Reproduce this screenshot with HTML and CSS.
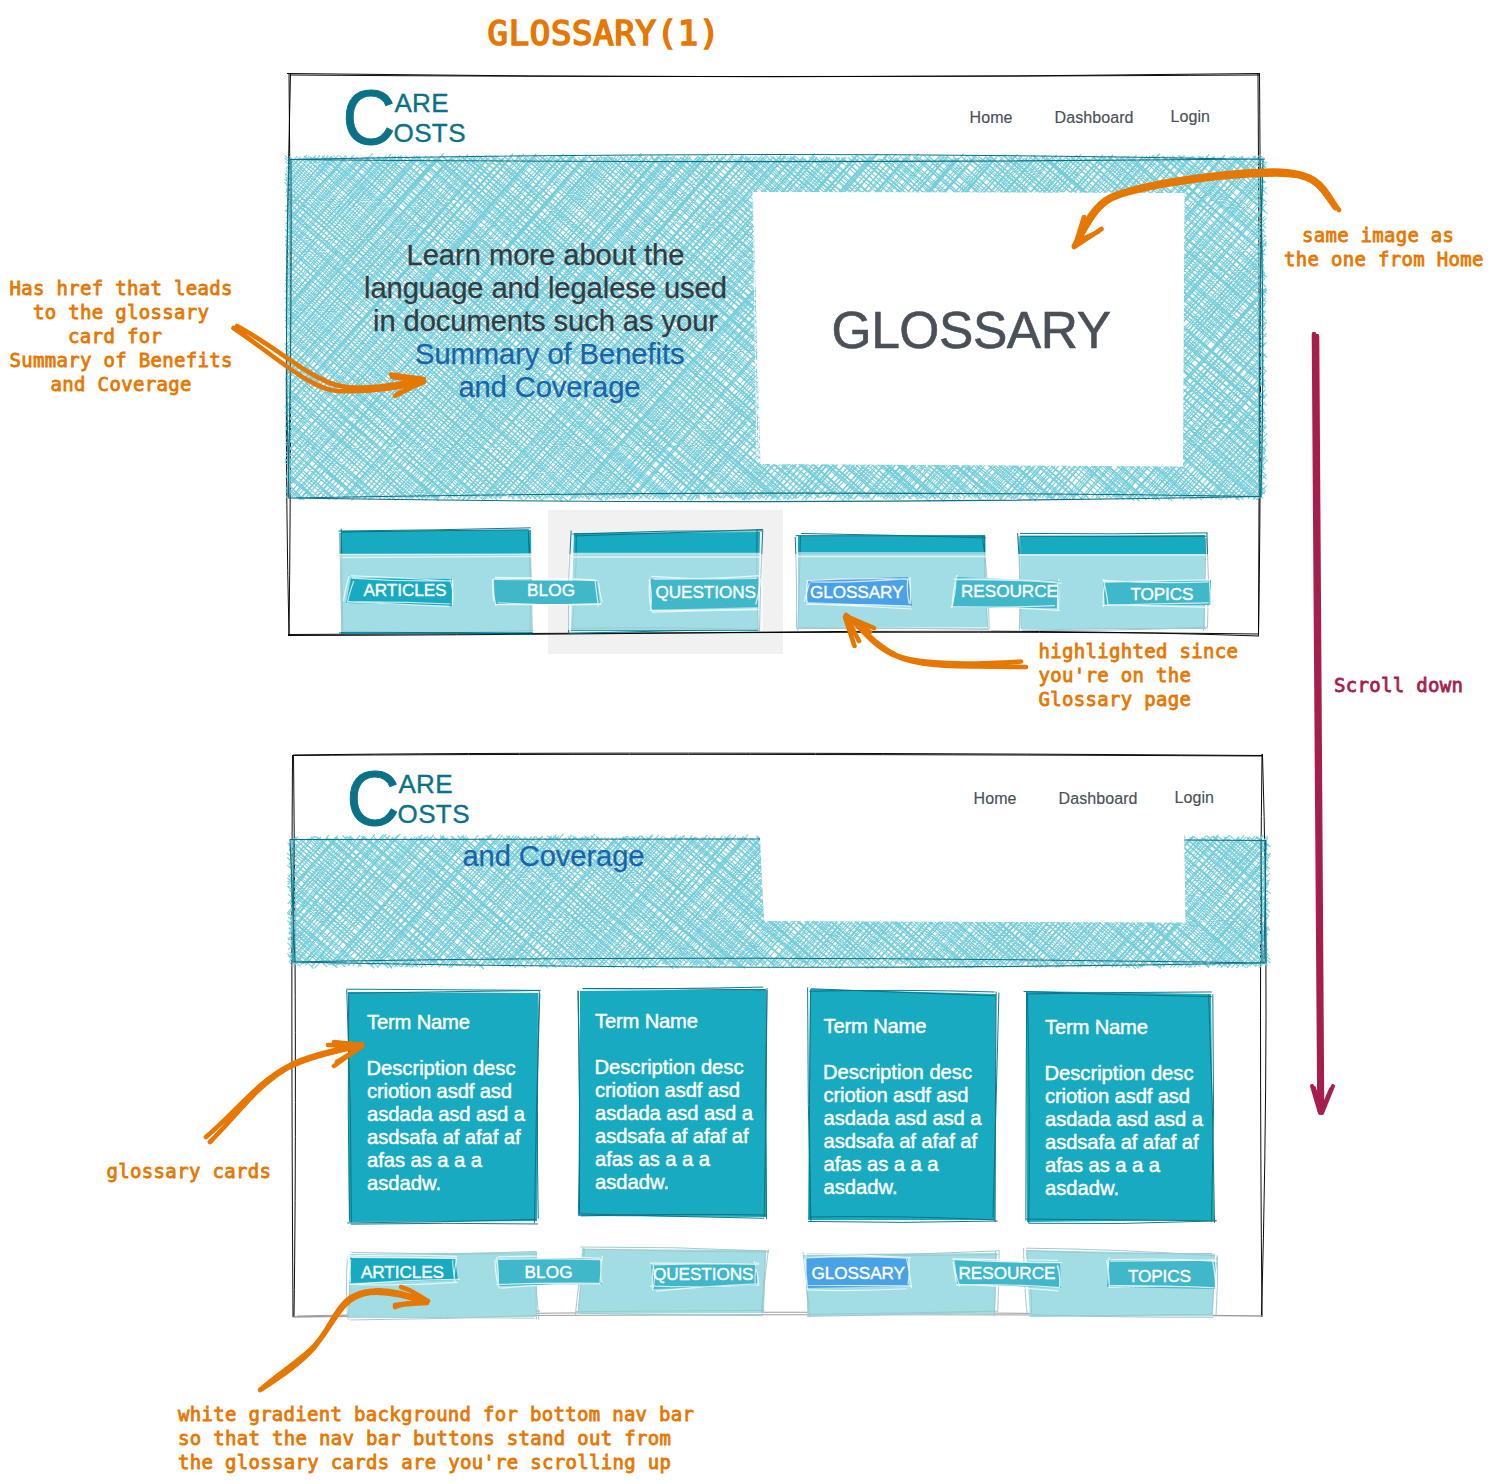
FILE: index.html
```html
<!DOCTYPE html>
<html lang="en">
<head>
<meta charset="utf-8">
<title>Glossary wireframe</title>
<link rel="stylesheet" href="styles.css">
</head>
<body>
<svg class="board" viewBox="0 0 1494 1483" width="1494" height="1483">
  <!-- first screen: frame and hero -->
  <rect class="grey" x="548" y="510" width="235" height="144"/>
  <g class="frame">
    <path d="M287 73.5Q774 80 1260 73.5M290 75Q700 78 1259 75"/>
    <path d="M289 73Q292 400 289 636M290.5 74Q283 380 289 635"/>
    <path d="M1258 74Q1260 360 1258.500 636M1259.500 74Q1262 420 1258.500 634"/>
    <path d="M288 635.5Q500 635 780 632T1259 636M288 634.500Q500 633.500 780 632.500T1259 634"/>
  </g>
  <g id="hatch-a" class="hatch"></g>
  <g class="edge">
    <path d="M289 159.500Q770 149.500 1262 159.500M289 159.500Q770 164 1265 159"/>
    <path d="M288 498Q774 489 1261 496.500M288 498Q774 506 1261 496.500"/>
    <path d="M289 158Q284 330 289 498M291 159Q292 340 288 497M1260 159Q1265 340 1261 497M1263 159Q1258 340 1260 497"/>
  </g>
  <path class="white" d="M753 192L1184.500 193L1183 466.500L760.500 464Z"/>
  <path class="white-line" d="M755 193L759 463M753 192L757 461"/>

  <!-- second screen: frame and hero -->
  <g class="frame">
    <path d="M292 755.500Q600 753 1263 756M293 755Q600 751 1262 755.500"/>
    <path d="M292.500 755Q291 1000 293 1317M293.500 755Q297 1100 294 1317"/>
    <path d="M1262 754Q1259 1000 1262 1317M1262.500 754Q1270 1000 1261.500 1317"/>
    <path class="faded" d="M292 1317Q700 1308 1263 1316M294 1317Q800 1313 1262 1316M297 1316L540 1311"/>
  </g>
  <g id="hatch-b" class="hatch"></g>
  <g class="edge">
    <path d="M290 839.500L760 839M1184 840L1266 840.500M291 962Q700 954 1264 963M291 962Q780 972 1265 963"/>
    <path d="M290 839L295 962M294 839L293 962M1261 839L1262 963M1266 840L1264 963M1265 841L1266 963"/>
  </g>
  <path class="white" d="M759.500 827L1184 827L1185.500 922.500L764 921Z"/>

  <g id="cards"></g>
  <!-- translucent strip behind the bottom navigation -->
  <path class="veil" d="M337 554H535V632H337ZM568 554H763V630H568ZM795 554H991V631H795ZM1017 554H1210V631H1017Z"/>
  <path class="veil-line" d="M340 554.500L532 554M341 557.500L532 556.500M571 553.500H760M571 557H760M798 553H987M798 556.500H987M1019 555H1206"/>
  <g id="buttons"></g>

  <g class="logo">
    <text class="big" x="342.500" y="143.500" textLength="53" lengthAdjust="spacingAndGlyphs">C</text>
    <text x="394.500" y="112" textLength="54">ARE</text><text x="393.500" y="142" textLength="72">OSTS</text>
    <text class="big" x="346.500" y="824.500" textLength="53" lengthAdjust="spacingAndGlyphs">C</text>
    <text x="398.500" y="793" textLength="54">ARE</text><text x="397.500" y="823" textLength="72">OSTS</text>
  </g>
  <g class="menu">
    <text x="969.500" y="123" textLength="43">Home</text><text x="1054.500" y="123" textLength="79">Dashboard</text><text x="1170.500" y="122" textLength="39.500">Login</text>
    <text x="973.500" y="804" textLength="43">Home</text><text x="1058.500" y="804" textLength="79">Dashboard</text><text x="1174.500" y="803" textLength="39.500">Login</text>
  </g>
  <g class="hero">
    <text x="406.500" y="265" textLength="278">Learn more about the</text>
    <text x="364" y="298" textLength="363">language and legalese used</text>
    <text x="373" y="331" textLength="345">in documents such as your</text>
    <g class="link">
      <text x="415" y="364" textLength="269.500">Summary of Benefits</text>
      <text x="458.500" y="397" textLength="182">and Coverage</text>
      <text x="462.500" y="866" textLength="182">and Coverage</text>
    </g>
  </g>
  <text class="image-title" x="831.500" y="348" textLength="279.500">GLOSSARY</text>

  <g class="tabs">
    <text x="363.500" y="596" textLength="83">ARTICLES</text><text x="527" y="596" textLength="48">BLOG</text>
    <text x="655.500" y="598" textLength="100.500">QUESTIONS</text><text x="810" y="598" textLength="93.500">GLOSSARY</text>
    <text x="961" y="597" textLength="97">RESOURCE</text><text x="1130.500" y="600" textLength="63">TOPICS</text>
    <text x="361" y="1278" textLength="83">ARTICLES</text><text x="524.500" y="1278" textLength="48">BLOG</text>
    <text x="653" y="1280" textLength="100.500">QUESTIONS</text><text x="811.500" y="1279" textLength="93.500">GLOSSARY</text>
    <text x="958.500" y="1279" textLength="97">RESOURCE</text><text x="1128" y="1282" textLength="63">TOPICS</text>
  </g>

  <g class="card-text">
    <g transform="translate(367 1029)"><text textLength="103">Term Name</text><text x="-.5" y="46" textLength="149">Description desc</text><text y="69" textLength="145">criotion asdf asd</text><text y="92" textLength="158">asdada asd asd a</text><text y="115" textLength="153.500">asdsafa af afaf af</text><text y="138" textLength="115">afas as a a a</text><text y="161" textLength="74">asdadw.</text></g>
    <g transform="translate(595 1028)"><text textLength="103">Term Name</text><text x="-.5" y="46" textLength="149">Description desc</text><text y="69" textLength="145">criotion asdf asd</text><text y="92" textLength="158">asdada asd asd a</text><text y="115" textLength="153.500">asdsafa af afaf af</text><text y="138" textLength="115">afas as a a a</text><text y="161" textLength="74">asdadw.</text></g>
    <g transform="translate(823.500 1033)"><text textLength="103">Term Name</text><text x="-.5" y="46" textLength="149">Description desc</text><text y="69" textLength="145">criotion asdf asd</text><text y="92" textLength="158">asdada asd asd a</text><text y="115" textLength="153.500">asdsafa af afaf af</text><text y="138" textLength="115">afas as a a a</text><text y="161" textLength="74">asdadw.</text></g>
    <g transform="translate(1045 1034)"><text textLength="103">Term Name</text><text x="-.5" y="46" textLength="149">Description desc</text><text y="69" textLength="145">criotion asdf asd</text><text y="92" textLength="158">asdada asd asd a</text><text y="115" textLength="153.500">asdsafa af afaf af</text><text y="138" textLength="115">afas as a a a</text><text y="161" textLength="74">asdadw.</text></g>
  </g>

  <g class="note">
    <text class="title" x="487.500" y="45" textLength="232">GLOSSARY(1)</text>
    <text x="9.500" y="295" textLength="223">Has href that leads</text><text x="33" y="319" textLength="176">to the glossary</text>
    <text x="68" y="343" textLength="94">card for</text><text x="9.500" y="367" textLength="223">Summary of Benefits</text><text x="50.500" y="391" textLength="141">and Coverage</text>
    <text x="1302" y="242" textLength="152">same image as</text><text x="1284" y="266" textLength="199.500">the one from Home</text>
    <text x="1038.500" y="658" textLength="199.500">highlighted since</text><text x="1038.500" y="682" textLength="152.500">you're on the</text><text x="1038.500" y="706" textLength="152.500">Glossary page</text>
    <text x="106.500" y="1178" textLength="164.500">glossary cards</text>
    <text x="178" y="1421" textLength="516">white gradient background for bottom nav bar</text>
    <text x="178" y="1445" textLength="493">so that the nav bar buttons stand out from</text>
    <text x="178" y="1469" textLength="493">the glossary cards are you're scrolling up</text>
    <text class="scroll" x="1334" y="692" textLength="129">Scroll down</text>
  </g>

  <g class="arrow">
    <path d="M237 326C280 349 315 384 346 387Q372 390 424 379M233.500 328C275 356 310 389 337 391Q378 393 424 382M391 374.500L424 379M392 377L421 381M395 396L424 381M397 394L424 382"/>
    <path d="M1339 210C1324 190 1322 171 1275 170.500C1200 172 1130 187 1109 197C1090 207 1082 231 1074 246M1335 208C1318 184 1314 174 1275 174.500C1200 176 1130 190 1112 199C1092 209 1084 236 1074 246M1084 217L1075 246M1101.500 229L1074 247M1084 219L1079 239M1098 232L1080 240"/>
    <path d="M1026 667C960 666 923 669 893 655C870 644 858 624 846 615M1021 661.500C965 665 920 664 898 656C872 644 862 625 846 615M874 628L846 616M870 632L846 617M854.500 646L845 617M859 641L847 618"/>
    <path d="M206 1137C236 1112 258 1081 290 1065Q308 1055 362 1044M210 1142C240 1112 255 1088 286 1069Q310 1056 362 1046M328 1045L360 1046M334 1042L362 1045M334 1066L362 1046M337 1062L361 1047"/>
    <path d="M260 1390C275 1376 295 1364 310 1350C336 1327 334 1292 374 1290.500Q396 1289 427 1302M262 1389C280 1377 300 1364 314 1348C337 1320 341 1297 370 1293Q392 1291 427 1303M401 1287C415 1291 417 1295 428 1301M395 1307C405 1303 415 1304 427 1303M395 1305L426 1301"/>
  </g>
  <g class="arrow down">
    <path d="M1314 334L1319.500 1110M1317 336L1322 1112"/>
    <path class="tip" d="M1312 1086L1320 1113M1314 1088L1322 1113M1333 1086L1322 1113M1331 1089L1321 1112"/>
  </g>
</svg>
<script src="script.js"></script>
</body>
</html>
```

FILE: styles.css
```css
body { margin: 0; background: #fff; }
.board { display: block; font-family: "Liberation Sans", Arial, sans-serif; fill: none; }
.frame { stroke: #000; stroke-width: .95; }
.faded { stroke: #999; }
.hatch { stroke: #76cedb; stroke-width: 1.05; }
.edge { stroke: #0b7285; stroke-width: 1.1; }
.grey { fill: #f1f1f1; }
.white { fill: #fff; }
.white-line { stroke: #fff; stroke-width: 1; stroke-dasharray: 4 1; }
.veil { fill: #fff; fill-opacity: .6; }
.veil-line { stroke: #fff; stroke-opacity: .65; stroke-width: 1.3; }
.card { fill: #17aac1; }
.card-line { stroke: #0b7285; stroke-width: .95; }
.pale { fill: #a2dde4; }
.pale-line { stroke: #9dc7ce; stroke-width: .95; }
.tab { fill: #40b8ca; }
.tab-solid { fill: #17aac1; }
.tab-active { fill: #4aa2e6; }
.tab-line { stroke: #fff; stroke-opacity: .75; stroke-width: 1.2; }
.logo { fill: #0b7285; font-size: 26px; stroke: #0b7285; stroke-width: .35; }
.logo .big { font-size: 77.500px; stroke-width: 1; }
.menu { fill: #495057; font-size: 16px; stroke: #495057; stroke-width: .15; }
.hero { fill: #343a40; font-size: 29.200px; stroke: #343a40; stroke-width: .25; }
.hero .link { fill: #1864ab; stroke: #1864ab; }
.image-title { fill: #495057; font-size: 51.500px; stroke: #495057; stroke-width: .6; }
.tabs { fill: #fff; font-size: 17.200px; stroke: #fff; stroke-width: .4; }
.card-text { fill: #fff; font-size: 20.200px; stroke: #fff; stroke-width: .45; }
.note { fill: #e67700; stroke: #e67700; stroke-width: .8; font-family: "DejaVu Sans Mono", monospace; font-size: 19px; }
.title { font-size: 34px; stroke-width: 1.7; }
.scroll { fill: #a61e4d; stroke: #a61e4d; }
.arrow { stroke: #e67700; stroke-width: 4.600; stroke-linecap: round; stroke-linejoin: round; }
.down { stroke: #a61e4d; stroke-width: 4.600; }
.tip { stroke-width: 4; }
```

FILE: script.js
```js
let seed = 7;
const rnd = () => (seed = (seed * 16807) % 2147483647) / 2147483647;
const jit = (n) => (rnd() * 2 - 1) * n;
const add = (id, d, cls) => {
  const p = document.createElementNS("http://www.w3.org/2000/svg", "path");
  p.setAttribute("d", d);
  if (cls) p.setAttribute("class", cls);
  document.getElementById(id).appendChild(p);
};

// cross hatching: two families of loose pen lines over a box
function hatch(id, x0, y0, x1, y1, over) {
  const cx = (x0 + x1) / 2, cy = (y0 + y1) / 2;
  const reach = Math.hypot(x1 - x0, y1 - y0) / 2;
  let d = "";
  for (const deg of [-49, 41]) {
    const a = deg * Math.PI / 180, c = Math.cos(a), s = Math.sin(a);
    for (let o = -reach; o < reach; o += 4) {
      for (let k = 0; k < 2; k++) {
        const off = o + jit(1.5), px = cx - s * off, py = cy + c * off;
        const tx = [(x0 - px) / c, (x1 - px) / c].sort((m, n) => m - n);
        const ty = [(y0 - py) / s, (y1 - py) / s].sort((m, n) => m - n);
        const t0 = Math.max(tx[0], ty[0]), t1 = Math.min(tx[1], ty[1]);
        if (t0 >= t1) continue;
        const u = t0 - rnd() * over, v = t1 + rnd() * over, w = jit(2.5);
        const n = (q) => q.toFixed(1);
        d += `M${n(px + c * u)} ${n(py + s * u)}L${n(px + c * v - s * w)} ${n(py + s * v + c * w)}`;
      }
    }
  }
  add(id, d);
}

// a filled quad with a doubled, slightly bowed outline
function quad(id, p, fill, line, amt) {
  add(id, `M${p[0]} ${p[1]}L${p[2]} ${p[3]}L${p[4]} ${p[5]}L${p[6]} ${p[7]}Z`, fill);
  let d = "";
  for (let k = 0; k < 2; k++) {
    for (let i = 0; i < 4; i++) {
      const j = (i + 1) % 4;
      const a = [p[2 * i] + jit(amt), p[2 * i + 1] + jit(amt)];
      const b = [p[2 * j] + jit(amt), p[2 * j + 1] + jit(amt)];
      d += `M${a}Q${(a[0] + b[0]) / 2 + jit(amt)} ${(a[1] + b[1]) / 2 + jit(amt)} ${b}`;
    }
  }
  add(id, d, line);
}

hatch("hatch-a", 289, 159, 1262, 496, 6);
hatch("hatch-b", 292, 840, 1265, 963, 7);

[[341, 531, 531, 530, 532, 633, 341, 634], [574, 533, 760, 532, 758, 631, 571, 631],
 [798, 536, 985, 535, 988, 627, 798, 628], [1020, 536, 1205, 535, 1205, 629, 1021, 629],
 [348, 992, 538, 993, 537, 1221, 349, 1222], [580, 991, 766, 989, 767, 1217, 579, 1216],
 [810, 989, 996, 994, 995, 1220, 808, 1220], [1026, 991, 1211, 994, 1214, 1220, 1027, 1222]
].forEach((p) => quad("cards", p, "card", "card-line", 3));

[[350, 1254, 537, 1252, 536, 1317, 348, 1317], [582, 1249, 766, 1250, 764, 1313, 578, 1314],
 [804, 1254, 997, 1253, 995, 1314, 808, 1316], [1026, 1250, 1215, 1254, 1213, 1316, 1030, 1317]
].forEach((p) => quad("cards", p, "pale", "pale-line", 3));

[[351, 578, 452, 579, 452, 606, 346, 603, "tab-solid"], [494, 580, 597, 581, 600, 604, 495, 604, "tab"],
 [651, 579, 758, 578, 758, 607, 651, 610, "tab"], [808, 580, 908, 577, 912, 606, 807, 602, "tab-active"],
 [956, 577, 1060, 581, 1058, 608, 953, 608, "tab"], [1103, 582, 1211, 580, 1211, 605, 1105, 605, "tab"],
 [350, 1258, 455, 1259, 458, 1280, 350, 1283, "tab-solid"], [498, 1259, 600, 1258, 602, 1284, 498, 1286, "tab"],
 [651, 1264, 757, 1263, 757, 1286, 653, 1289, "tab"], [806, 1257, 908, 1257, 909, 1286, 806, 1288, "tab-active"],
 [955, 1260, 1060, 1263, 1061, 1288, 957, 1284, "tab"], [1109, 1260, 1215, 1261, 1215, 1289, 1107, 1287, "tab"]
].forEach((p) => quad("buttons", p, p[8], "tab-line", 3));
```
